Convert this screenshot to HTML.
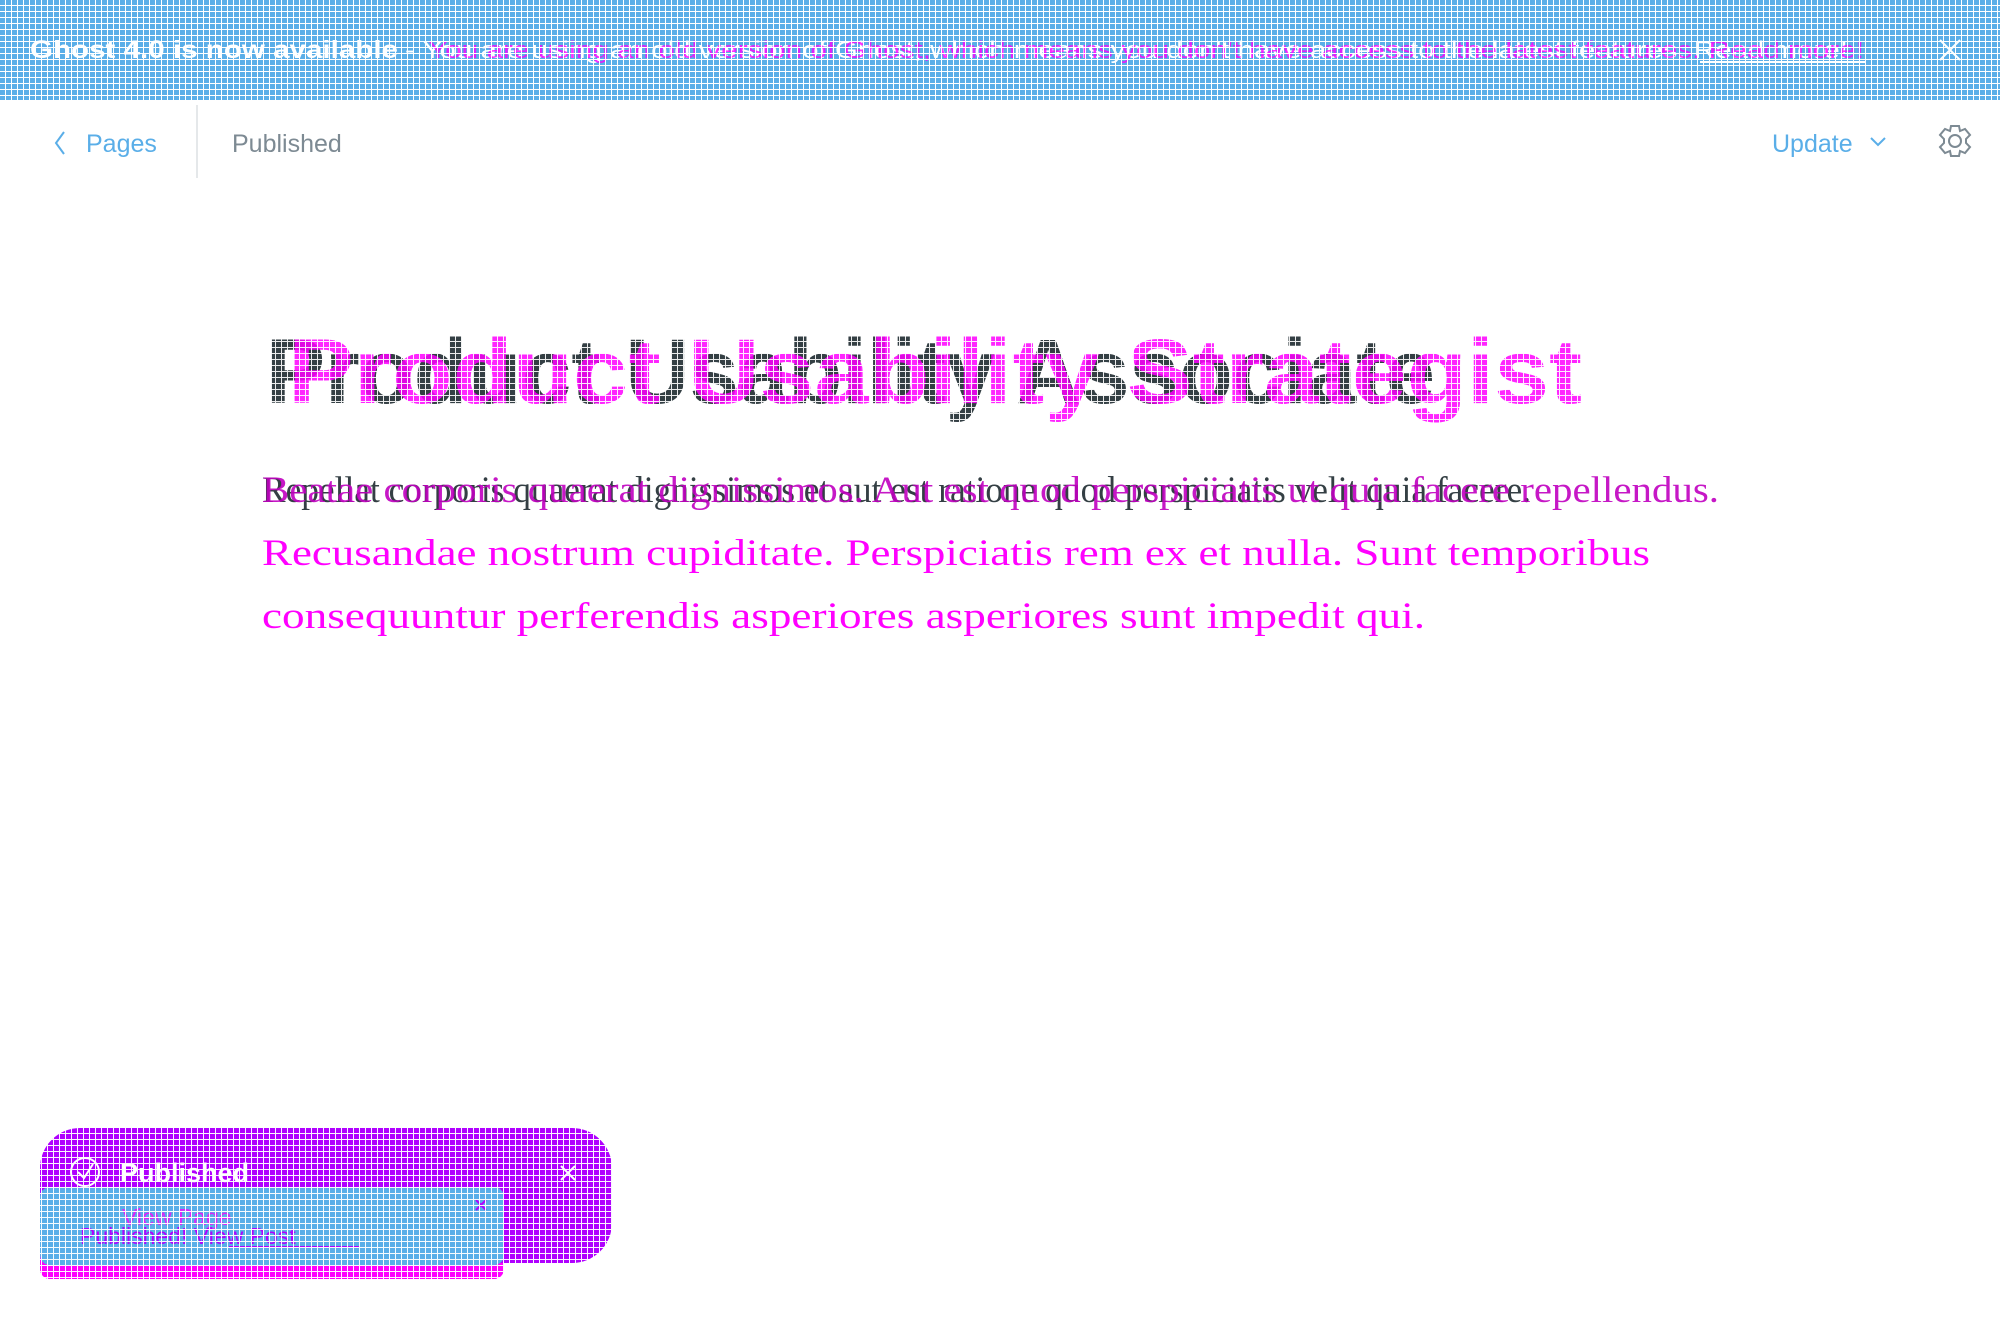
<!DOCTYPE html>
<html><head><meta charset="utf-8"><style>
html,body{margin:0;padding:0;width:2000px;height:1320px;overflow:hidden;background:#fff}
svg{display:block}
</style></head><body>
<svg width="2000" height="1320" viewBox="0 0 2000 1320" xmlns="http://www.w3.org/2000/svg">
<defs>
<pattern id="g" width="6" height="6" patternUnits="userSpaceOnUse">
<rect x="0" y="5" width="6" height="1" fill="#fff"/><rect x="5" y="0" width="1" height="6" fill="#fff"/>
</pattern>
</defs>
<rect x="0" y="0" width="2000" height="100" fill="#5aaee8"/>
<text x="30" y="58" font-family="Liberation Sans, sans-serif" font-size="25" font-weight="bold" fill="#fff" textLength="368" lengthAdjust="spacingAndGlyphs">Ghost 4.0 is now available</text>
<text x="405" y="58" font-family="Liberation Sans, sans-serif" font-size="24" fill="#fff" textLength="1443" lengthAdjust="spacingAndGlyphs">- You are using an old version of Ghost, which means you don't have access to the latest features. Read more!</text>
<text x="428" y="58" font-family="Liberation Sans, sans-serif" font-size="24" fill="#ff00ff" opacity="0.8" textLength="1436" lengthAdjust="spacingAndGlyphs">You are using an old version of Ghost, which means you don't have access to the latest features. Read more!</text>
<rect x="1700" y="61" width="165" height="2" fill="#fff"/>
<path d="M1940 40 L1960 60 M1960 40 L1940 60" stroke="#fff" stroke-width="2"/>
<rect x="0" y="0" width="2000" height="100" fill="url(#g)"/>
<path d="M64 132 L56 143 L64 154" stroke="#5aaee8" stroke-width="2" fill="none"/>
<text x="86" y="152" font-family="Liberation Sans, sans-serif" font-size="25" fill="#5aaee8">Pages</text>
<line x1="197" y1="105" x2="197" y2="178" stroke="#e5e8ea" stroke-width="2"/>
<text x="232" y="152" font-family="Liberation Sans, sans-serif" font-size="25" fill="#7d8a93">Published</text>
<text x="1772" y="152" font-family="Liberation Sans, sans-serif" font-size="25" fill="#5aaee8">Update</text>
<path d="M1871 138 L1878 145 L1885 138" stroke="#5aaee8" stroke-width="2" fill="none"/>
<g transform="translate(1955,141)" stroke="#7d8a93" stroke-width="2" fill="none">
<circle r="6"/>
<path d="M-4 -15 L4 -15 L5 -10 L10 -12 L15 -6 L11 -2 L11 2 L15 6 L10 12 L5 10 L4 15 L-4 15 L-5 10 L-10 12 L-15 6 L-11 2 L-11 -2 L-15 -6 L-10 -12 L-5 -10 Z"/>
</g>
<text x="266" y="403" font-family="Liberation Sans, sans-serif" font-size="92" font-weight="bold" fill="#343f44" textLength="1169" lengthAdjust="spacingAndGlyphs">Product Usability Associate</text>
<text x="288" y="403" font-family="Liberation Sans, sans-serif" font-size="92" font-weight="bold" fill="#ff00ff" opacity="0.85" textLength="1294" lengthAdjust="spacingAndGlyphs">Product Usability Strategist</text>
<rect x="260" y="330" width="1330" height="95" fill="url(#g)" opacity="0.9"/>
<g font-family="Liberation Serif, serif" font-size="37">
<text x="262" y="502" fill="#343f44" textLength="1269" lengthAdjust="spacingAndGlyphs">Repellat corporis quaerat dignissimos et aut est ratione quod perspiciatis velit quia facere.</text>
<text x="262" y="502" fill="#c000c0" opacity="0.9" textLength="1457" lengthAdjust="spacingAndGlyphs">Beatae corporis quaerat dignissimos. Aut est quod perspiciatis ut quia facere repellendus.</text>
<text x="262" y="565" fill="#ff00ff" textLength="1388" lengthAdjust="spacingAndGlyphs">Recusandae nostrum cupiditate. Perspiciatis rem ex et nulla. Sunt temporibus</text>
<text x="262" y="628" fill="#ff00ff" textLength="1163" lengthAdjust="spacingAndGlyphs">consequuntur perferendis asperiores asperiores sunt impedit qui.</text>
</g>
<rect x="40" y="1190" width="464" height="89" rx="10" fill="#ff00ff"/>
<rect x="40" y="1128" width="572" height="135" rx="40" fill="#b000ff"/>
<rect x="40" y="1187" width="464" height="78" rx="10" fill="#5aaee8"/>
<circle cx="85" cy="1172" r="14" stroke="#fff" stroke-width="2" fill="none"/>
<path d="M78 1172 L84 1178 L93 1164" stroke="#fff" stroke-width="2" fill="none"/>
<text x="120" y="1182" font-family="Liberation Sans, sans-serif" font-size="27" font-weight="bold" fill="#fff">Published</text>
<path d="M561 1166 L575 1180 M575 1166 L561 1180" stroke="#fff" stroke-width="2"/>
<text x="122" y="1225" font-family="Liberation Sans, sans-serif" font-size="23" fill="#ff00ff" opacity="0.8">View Page</text>
<text x="80" y="1244" font-family="Liberation Sans, sans-serif" font-size="23" fill="#b000ff">Published! View Post</text>
<rect x="229" y="1246" width="130" height="2" fill="#b000ff"/>
<path d="M476 1200 L486 1210 M486 1200 L476 1210" stroke="#b000ff" stroke-width="2"/>
<rect x="40" y="1128" width="572" height="151" fill="url(#g)" opacity="0.95"/>
</svg>
</body></html>
